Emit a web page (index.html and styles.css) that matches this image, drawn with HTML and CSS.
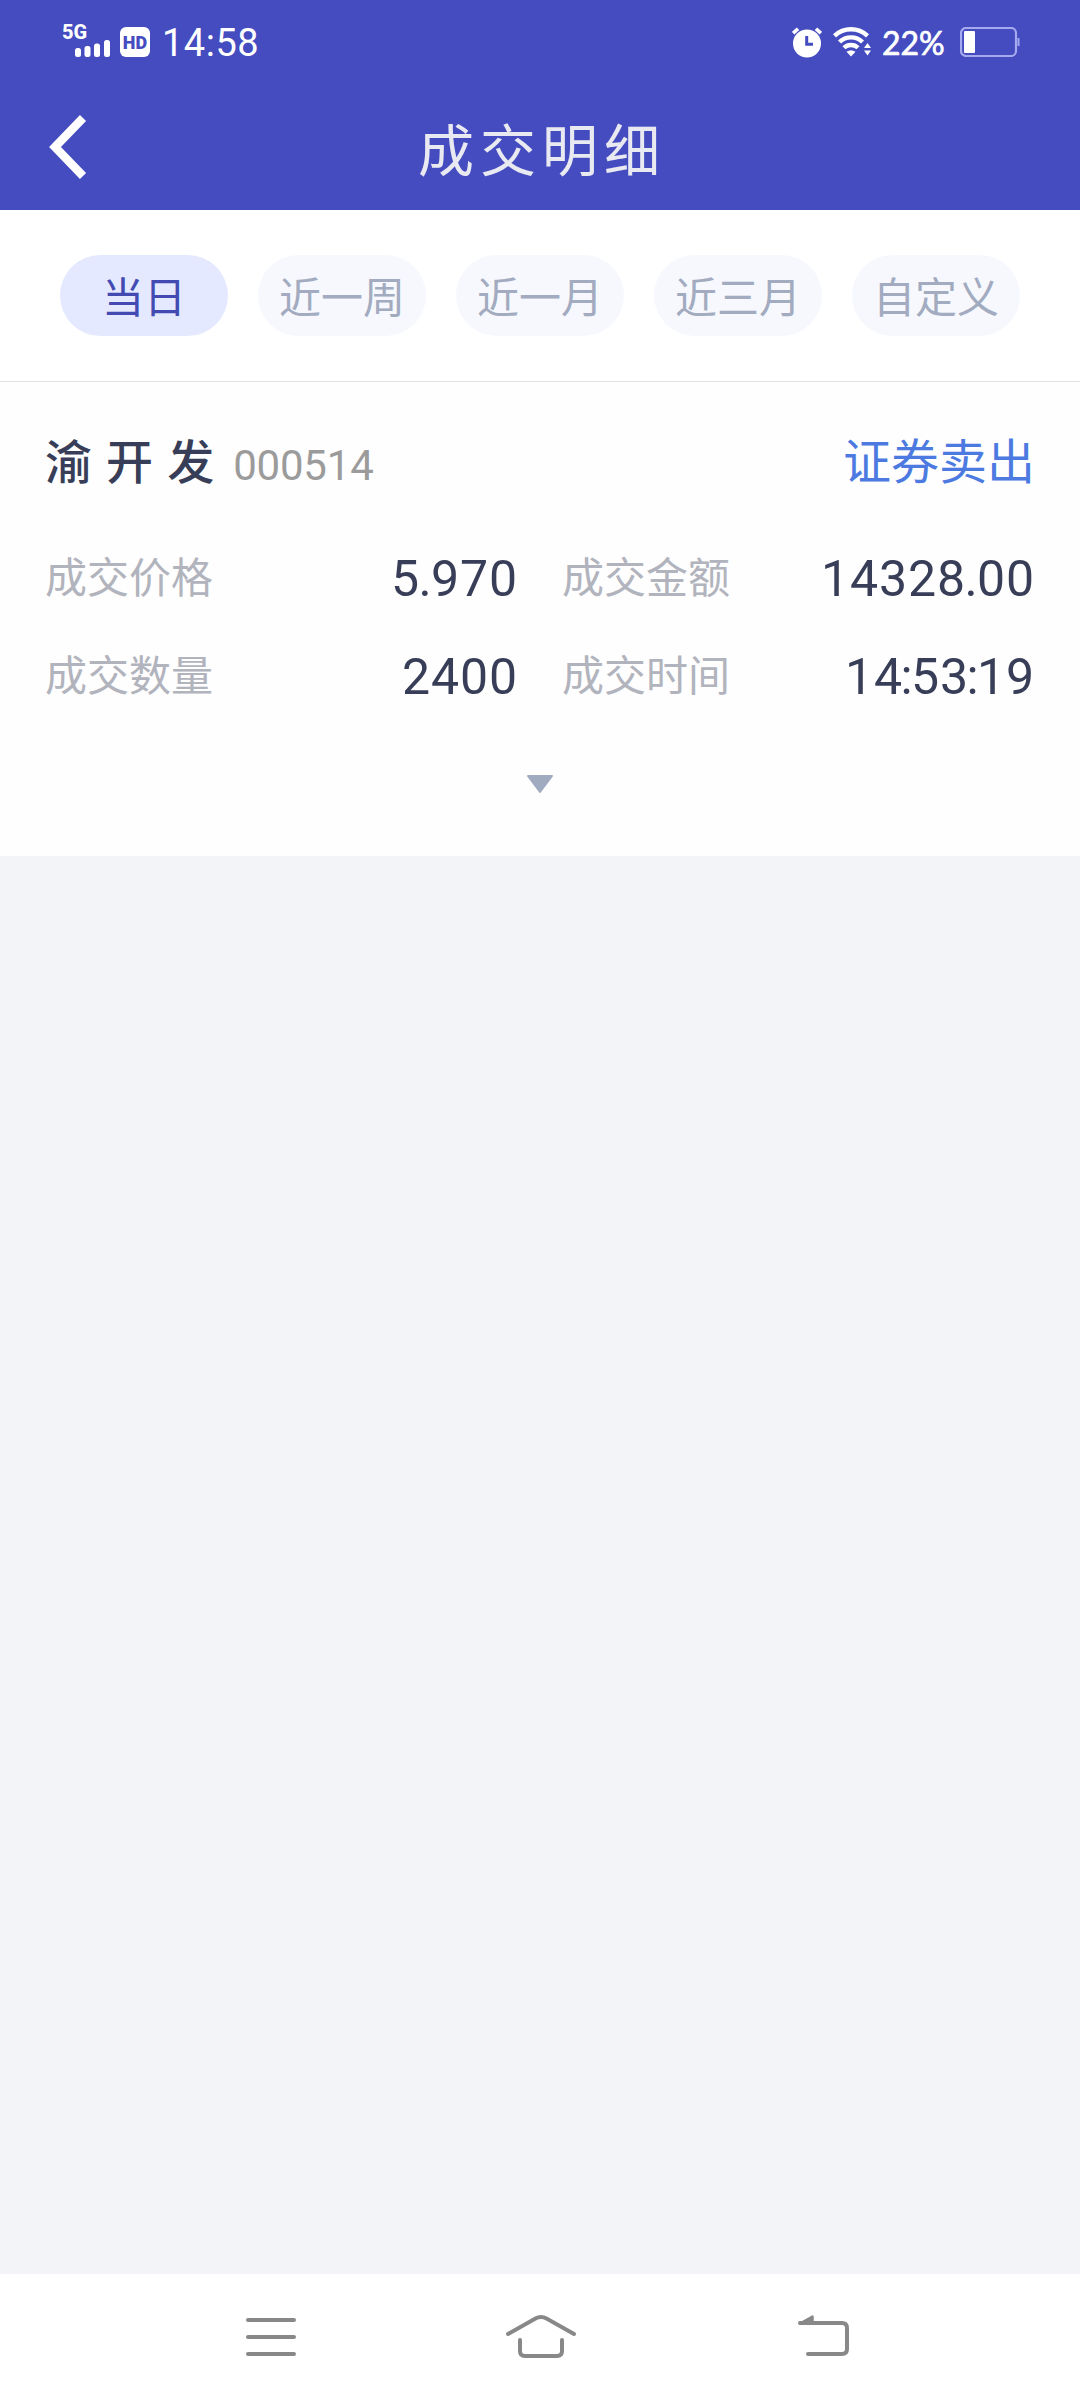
FILE: index.html
```html
<!DOCTYPE html>
<html lang="zh-CN">
<head>
<meta charset="utf-8">
<title>成交明细</title>
<link rel="stylesheet" href="styles.css">
</head>
<body>
<header class="header">
  <div class="status">
    <div class="signal">
      <span class="net">5G</span>
      <svg class="bars" width="36" height="17" viewBox="0 0 36 17" fill="#fff"><rect x="0" y="8" width="6" height="9" rx="2.500"/><rect x="9.500" y="6" width="6" height="11" rx="2.500"/><rect x="19" y="3.500" width="6" height="13.500" rx="2.500"/><rect x="29" y="0" width="6" height="17" rx="2.500"/></svg>
    </div>
    <span class="hd">HD</span>
    <span class="clock">14:58</span>
    <svg class="alarm" width="30" height="31" viewBox="0 0 30 31"><circle cx="15" cy="16.500" r="14" fill="#fff"/><path d="M1.200 6.200 6 1.700M28.800 6.200 24 1.700" stroke="#fff" stroke-width="3.600"/><path d="M14.700 9v8.200H21" fill="none" stroke="#444cc0" stroke-width="3"/></svg>
    <svg class="wifi" width="39" height="30" viewBox="0 0 39 30"><g fill="none" stroke="#fff" stroke-width="4.400"><path d="M1.500 8.800a24 24 0 0 1 33 0"/><path d="M6.500 15a16.500 16.500 0 0 1 23 0"/><path d="M11 20.800a10 10 0 0 1 14 0"/></g><path d="M18 29.500l-4.500-4.700q4.500-3.200 9 0zM34.500 16l3.500 5h-7zM34.500 28.500l3.500-5h-7z" fill="#fff"/></svg>
    <span class="percent">22%</span>
    <svg class="battery" width="60" height="30" viewBox="0 0 60 30"><rect x="1" y="1" width="55" height="28" rx="5" fill="none" stroke="#a5a9ee" stroke-width="2.200"/><rect x="4" y="4" width="11" height="22" rx="1" fill="#fff"/><path d="M58.500 11v8" stroke="#a5a9ee" stroke-width="2"/></svg>
  </div>
  <div class="titlebar">
    <svg class="back" width="40" height="64" viewBox="0 0 40 64"><path d="M35 3 7 32 35 61" fill="none" stroke="#fff" stroke-width="8.500"/></svg>
    <h1 class="title">成交明细</h1>
  </div>
</header>
<nav class="filters">
  <span class="chip active">当日</span>
  <span class="chip">近一周</span>
  <span class="chip">近一月</span>
  <span class="chip">近三月</span>
  <span class="chip">自定义</span>
</nav>
<main class="card">
  <div class="stock">
    <span class="name">渝 开 发</span>
    <span class="code">000514</span>
    <span class="side">证券卖出</span>
  </div>
  <div class="details">
    <div class="item"><span class="label">成交价格</span><span class="value">5<span class="dot">.</span>970</span></div>
    <div class="item"><span class="label">成交金额</span><span class="value">14328<span class="dot">.</span>00</span></div>
    <div class="item"><span class="label">成交数量</span><span class="value">2400</span></div>
    <div class="item"><span class="label">成交时间</span><span class="value">14<span class="colon">:</span>53<span class="colon">:</span>19</span></div>
  </div>
  <svg class="expand" width="28" height="19" viewBox="0 0 28 19"><path d="M2 1h24L14 17z" fill="#a0abc0" stroke="#a0abc0" stroke-width="2" stroke-linejoin="round"/></svg>
</main>
<footer class="sysnav">
  <svg class="navicon" viewBox="0 0 80 60"><path d="M17 16h46M17 33h46M17 50h46"/></svg>
  <svg class="navicon" viewBox="0 0 80 60"><path d="M8 30 35.500 14.500Q41 11.500 46.500 14.500L74 30M20 36v11q0 5 5 5h32q5 0 5-5V36"/></svg>
  <svg class="navicon last" viewBox="0 0 80 60"><path d="M19 19h42q5 0 5 5v21q0 5-5 5H27"/><path d="M19 19.500 31.500 12.500v7z" stroke-width="2.500" fill="#888"/></svg>
</footer>
</body>
</html>
```
FILE: styles.css
```css
* { box-sizing: border-box; }
body {
  margin: 0;
  width: 1080px;
  height: 2400px;
  display: flex;
  flex-direction: column;
  background: #f3f4f7;
  font-family: "Noto Sans CJK SC", sans-serif;
}
svg { display: block; flex: none; }
span { white-space: nowrap; }

.header { height: 210px; background: #444cc0; color: #fff; }
.status {
  height: 90px;
  padding-left: 62px;
  display: flex;
  align-items: flex-start;
  font-family: Roboto, sans-serif;
}
.signal { width: 58px; padding-top: 22px; }
.net { display: block; height: 18px; font-size: 20px; line-height: 21px; font-weight: 800; }
.bars { margin-left: 13px; }
.hd {
  width: 30px;
  height: 30px;
  margin-top: 27px;
  border-radius: 6px;
  background: #fff;
  color: #444cc0;
  font-size: 18px;
  font-weight: 900;
  line-height: 31px;
  text-align: center;
}
.clock { width: 100px; margin: 21px 0 0 12px; font-size: 38px; line-height: 44px; font-weight: 450; letter-spacing: .5px; }
.alarm { margin: 27px 0 0 530px; }
.wifi { margin: 27px 0 0 11px; }
.percent { width: 66px; margin: 24px 0 0 10px; font-family: Lato, sans-serif; font-size: 32px; line-height: 38px; -webkit-text-stroke: .7px #fff; }
.battery { margin: 27px 0 0 12px; }

.titlebar { height: 120px; display: flex; align-items: center; padding-left: 48px; }
.back { margin-top: -6px; }
.title {
  width: 570px;
  margin: -6px 0 0 330px;
  font-size: 56px;
  line-height: 64px;
  font-weight: 400;
  letter-spacing: 6px;
  color: #e9e9f1;
}

.filters {
  height: 172px;
  padding: 45px 60px 0;
  display: flex;
  gap: 30px;
  background: #fff;
  border-bottom: 1px solid #e1e2e4;
}
.chip {
  width: 168px;
  height: 81px;
  border-radius: 41px;
  background: #f6f8fd;
  color: #a2abbf;
  font-size: 42px;
  line-height: 80px;
  text-align: center;
}
.active { background: #e4e9ff; color: #434bb2; }

.card { height: 474px; background: #fefefe; }
.stock { height: 144px; padding: 8px 45px 0; display: flex; align-items: center; }
.name { font-size: 47px; font-weight: 500; word-spacing: 3.500px; color: #383e58; }
.code { margin: 14px 0 0 19px; font-family: Roboto, sans-serif; font-size: 42px; letter-spacing: -.2px; color: #9b9b9b; }
.side { margin-left: auto; font-size: 48px; color: #4c7ae1; }
.details {
  padding: 0 45px;
  display: grid;
  grid-template-columns: 473px 473px;
  grid-auto-rows: 98px;
  column-gap: 44px;
}
.item { display: flex; align-items: center; justify-content: space-between; }
.label { margin-top: -2px; font-size: 42px; color: #b1b3bd; }
.value { padding-top: 8px; font-family: Roboto, sans-serif; font-size: 50px; letter-spacing: .9px; color: #383e58; }
.dot { margin: 0 -1.500px; }
.colon { margin: 0 -2.500px; }
.expand { margin: 53px auto 0; }

.sysnav {
  height: 126px;
  margin-top: auto;
  padding: 30px 0 0 231px;
  display: flex;
  gap: 189px;
  background: #fff;
}
.navicon { width: 80px; height: 60px; fill: none; stroke: #888; stroke-width: 4; stroke-linecap: round; stroke-linejoin: round; }
.last { margin-left: 12px; }
```
